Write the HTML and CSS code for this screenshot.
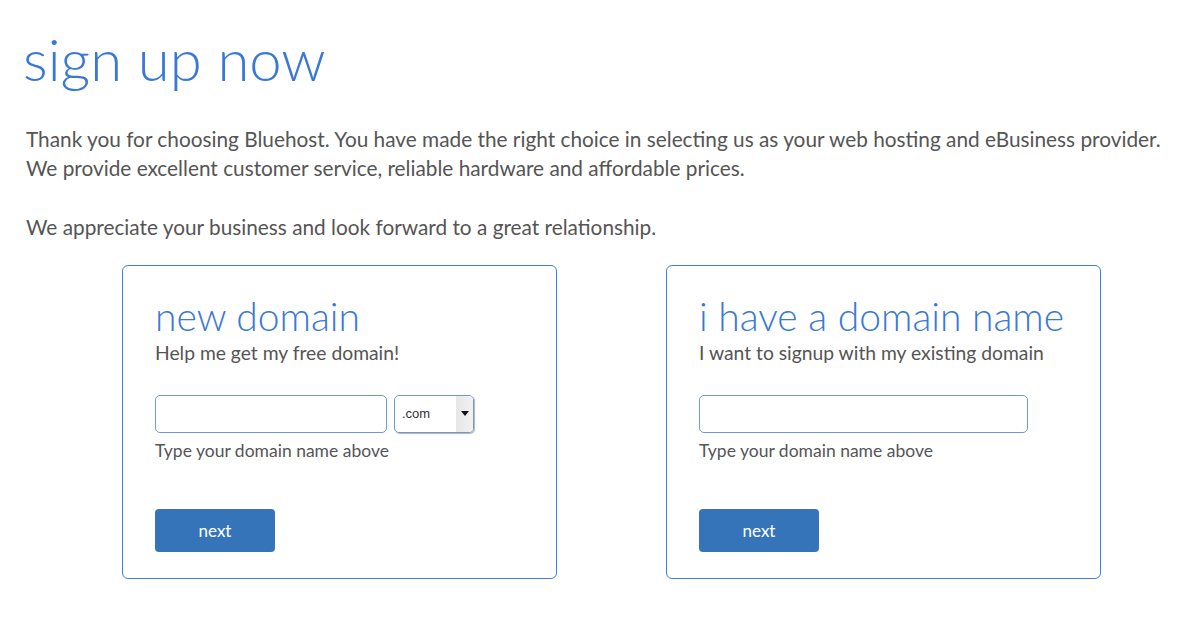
FILE: index.html
```html
<!DOCTYPE html>
<html lang="en">
<head>
    <meta charset="UTF-8">
    <meta name="viewport" content="width=device-width, initial-scale=1.0">
    <title>sign up now</title>
    <link rel="stylesheet" href="styles.css">
</head>
<body>

<div class="page">
    <h1>sign up now</h1>

    <p class="intro">
        Thank you for choosing Bluehost. You have made the right choice in selecting us as your web hosting and eBusiness provider.<br>
        We provide excellent customer service, reliable hardware and affordable prices.
    </p>
    <p class="intro">We appreciate your business and look forward to a great relationship.</p>

    <div class="cards">
        <!-- new domain -->
        <form class="card">
            <h2>new domain</h2>
            <div class="sub">Help me get my free domain!</div>
            <div class="field-row">
                <input type="text" class="domain-input short">
                <div class="tld">
                    <span class="tld-value">.com</span>
                    <span class="tld-arrow"></span>
                </div>
            </div>
            <div class="hint">Type your domain name above</div>
            <button type="button" class="next-btn">next</button>
        </form>

        <!-- existing domain -->
        <form class="card">
            <h2>i have a domain name</h2>
            <div class="sub">I want to signup with my existing domain</div>
            <div class="field-row">
                <input type="text" class="domain-input long">
            </div>
            <div class="hint">Type your domain name above</div>
            <button type="button" class="next-btn">next</button>
        </form>
    </div>
</div>

</body>
</html>
```

FILE: styles.css
```css
body {
    margin: 0;
    padding: 0;
    background-color: #fff;
    font-family: 'Lato', 'Open Sans', sans-serif;
    color: #555;
}
.page {
    padding: 0 0 0 26px;
}
h1 {
    margin: 23px 0 0 -3px;
    font-size: 58px;
    font-weight: 300;
    line-height: 72px;
    color: #3a78d6;
}
.intro {
    margin: 29px 0 0;
    font-size: 20.8px;
    line-height: 29px;
    color: #555;
}
.intro + .intro {
    margin-top: 30px;
}
.cards {
    display: flex;
    gap: 109px;
    margin: 24px 0 0 96px;
}
.card {
    box-sizing: border-box;
    width: 435px;
    height: 314px;
    border: 1px solid #3d7fe0;
    border-radius: 6px;
    padding: 29px 0 0 32px;
}
h2 {
    margin: 0;
    font-size: 39px;
    font-weight: 300;
    line-height: 42px;
    color: #3a78d6;
}
.sub {
    margin-top: 4px;
    font-size: 19.3px;
    line-height: 24px;
    color: #555;
}
.field-row {
    display: flex;
    gap: 7px;
    margin-top: 30px;
}
.domain-input {
    box-sizing: border-box;
    height: 38px;
    border: 1px solid #6b9ad6;
    border-radius: 5px;
    padding: 0 8px;
    font-size: 16px;
}
.domain-input.short {
    width: 232px;
}
.domain-input.long {
    width: 329px;
}
.tld {
    box-sizing: border-box;
    display: flex;
    width: 80px;
    height: 38px;
    border: 1px solid #6b9ad6;
    border-radius: 5px;
    overflow: hidden;
    box-shadow: 1px 1px 1px rgba(0, 0, 0, 0.3);
}
.tld-value {
    flex: 1;
    padding-left: 7px;
    font-family: 'Liberation Sans', Arial, sans-serif;
    font-size: 13px;
    line-height: 36px;
    color: #333;
}
.tld-arrow {
    position: relative;
    width: 17px;
    background: linear-gradient(to right, #e6e6e6, #f2f2f2);
}
.tld-arrow::after {
    content: "";
    position: absolute;
    left: 5px;
    top: 15px;
    border-left: 4px solid transparent;
    border-right: 4px solid transparent;
    border-top: 5px solid #111;
}
.hint {
    margin-top: 7px;
    font-size: 17.5px;
    line-height: 22px;
    color: #555;
}
.next-btn {
    display: block;
    width: 120px;
    height: 43px;
    margin-top: 47px;
    background-color: #3574b9;
    color: white;
    border: none;
    border-radius: 4px;
    font-family: 'Lato', sans-serif;
    font-size: 17px;
    cursor: pointer;
}
```
